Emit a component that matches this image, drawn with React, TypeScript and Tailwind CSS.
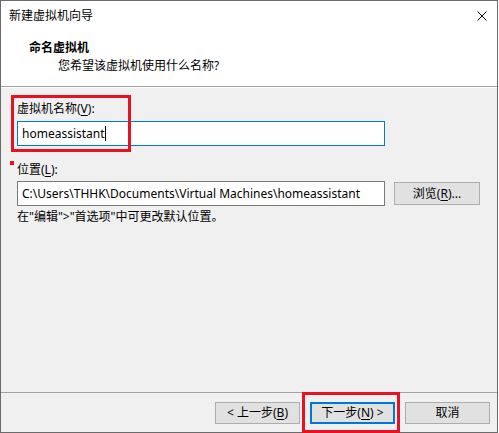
import React from "react";

const font = "font-['Noto_Sans','Noto_Sans_CJK_SC',sans-serif]";

function U({ children }: { children: React.ReactNode }) {
  return <span className="underline underline-offset-2">{children}</span>;
}

function Btn({ children, focused }: { children: React.ReactNode; focused?: boolean }) {
  return (
    <div
      className={`w-[85px] h-[22px] flex items-center justify-center bg-[#e1e1e1] text-[12px] leading-none text-black ${
        focused ? "border-2 border-[#0078d7]" : "border border-[#adadad]"
      }`}
    >
      {children}
    </div>
  );
}

export default function App() {
  return (
    <div className={`relative w-[499px] h-[433px] bg-white ${font}`}>
      <div className="w-[498px] h-[433px] border border-[#6b6b6b] flex flex-col">
        {/* title bar */}
        <div className="h-[29px] bg-white flex items-center justify-between pl-[8px] pr-[9px]">
          <span className="text-[12px] leading-4 text-black">新建虚拟机向导</span>
          <svg width="10" height="10" viewBox="0 0 10 10" className="mr-[1px]">
            <path d="M0.5 0.5 L9.5 9.5 M9.5 0.5 L0.5 9.5" stroke="#000" strokeWidth="1" />
          </svg>
        </div>

        {/* header */}
        <div className="h-[57px] bg-white border-b border-[#a0a0a0] pt-[10px]">
          <div className="pl-[28px] text-[12px] leading-4 font-bold text-black">命名虚拟机</div>
          <div className="pl-[57px] mt-[2px] text-[12px] leading-4 text-black">您希望该虚拟机使用什么名称?</div>
        </div>

        {/* body */}
        <div className="flex-1 bg-[#f0f0f0] border-t border-white pl-[16px] pt-[13px] text-[12px] leading-4 text-black">
          <div>
            虚拟机名称(<U>V</U>):
          </div>
          <div className="mt-[4px] w-[368px] h-[25px] bg-white border border-[#0078d7] flex items-center pl-[4px]">
            <span>homeassistant</span>
            <span className="w-px h-[15px] bg-black" />
          </div>

          <div className="mt-[16px]">
            位置(<U>L</U>):
          </div>
          <div className="mt-[3px] flex items-center">
            <div className="w-[368px] h-[25px] bg-white border border-[#7a7a7a] flex items-center pl-[4px]">
              C:\Users\THHK\Documents\Virtual Machines\homeassistant
            </div>
            <div className="ml-[9px] w-[86px] h-[23px] bg-[#e1e1e1] border border-[#adadad] flex items-center justify-center">
              浏览(<U>R</U>)...
            </div>
          </div>
          <div className="mt-[3px]">在"编辑"&gt;"首选项"中可更改默认位置。</div>
        </div>

        {/* footer */}
        <div className="h-[40px] bg-[#f0f0f0] border-t border-[#a0a0a0] flex items-start justify-end pt-[9px] pr-[7px] gap-[10px]">
          <Btn>
            &lt; 上一步(<U>B</U>)
          </Btn>
          <Btn focused>
            下一步(<U>N</U>) &gt;
          </Btn>
          <Btn>取消</Btn>
        </div>
      </div>

      {/* annotation boxes */}
      <div className="absolute left-[11px] top-[95px] w-[120px] h-[57px] border-[3px] border-[#e81123]" />
      <div className="absolute left-[10px] top-[161px] w-[4px] h-[4px] bg-[#e81123]" />
      <div className="absolute left-[302px] top-[392px] w-[98px] h-[41px] border-[3px] border-[#e81123]" />
    </div>
  );
}
